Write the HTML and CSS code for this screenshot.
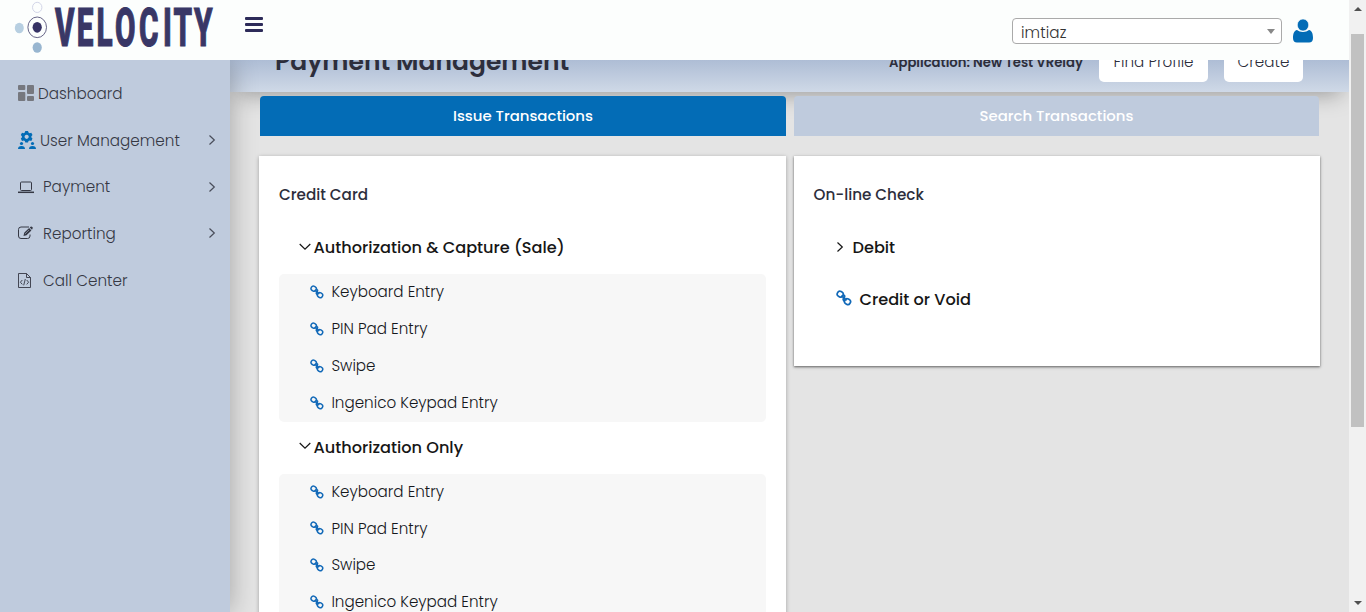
FILE: index.html
```html
<!DOCTYPE html>
<html lang="en">
<head>
<meta charset="utf-8">
<title>Velocity - Payment Management</title>
<link rel="stylesheet" href="styles.css">
</head>
<body>
<svg class="symbols" aria-hidden="true">
  <symbol id="link" viewBox="0 0 14 14"><g fill="none" stroke="#1269b8" stroke-width="1.500"><rect x="1.100" y="1.300" width="5.200" height="4.700" rx="2.200" transform="rotate(30 3.700 3.600)"/><rect x="7.500" y="7.800" width="5.200" height="4.700" rx="2.200" transform="rotate(30 10.100 10.100)"/><path d="M4.700 4.900 9.300 9M6.400 4 7.600 5.200 7.400 6.700M6.500 7.200 6.300 8.600 7.500 9.900"/></g></symbol>
  <symbol id="right" viewBox="0 0 8 12"><path d="M1.500 1.500 6.300 6 1.500 10.500" fill="none" stroke="currentColor" stroke-width="1.200"/></symbol>
  <symbol id="down" viewBox="0 0 12 8"><path d="M.7 1 6 6.200 11.300 1" fill="none" stroke="currentColor" stroke-width="1.200"/></symbol>
</svg>
<div class="app">
  <header class="topbar">
    <svg class="logo" width="220" height="60" viewBox="0 0 220 60">
      <ellipse cx="37.200" cy="7.400" rx="4.700" ry="5.100" fill="none" stroke="#d3d6e8"/>
      <ellipse cx="19.300" cy="28" rx="4.500" ry="5.200" fill="#b7cfe1"/>
      <ellipse cx="37.200" cy="47.500" rx="4.600" ry="5.200" fill="#98b6d0"/>
      <ellipse cx="37.200" cy="27.300" rx="9.300" ry="10.300" fill="none" stroke="#565379" stroke-width=".9"/>
      <ellipse cx="37.200" cy="27.300" rx="4.600" ry="5.400" fill="#353264"/>
      <text class="wordmark" transform="scale(.56 1)" x="98 137 172.500 205.500 248.300 291 310 346.500" y="46.200">VELOCITY</text>
    </svg>
    <button class="burger" aria-label="Menu"><i></i><i></i><i></i></button>
    <div class="picker"><span>imtiaz</span><i class="caret"></i></div>
    <svg class="user" width="20" height="24" viewBox="0 0 20 24" fill="#036cb6"><path d="M4 11C1 11.500 0 15 0 19c0 3 1.500 4.500 4 4.500h12c2.500 0 4-1.500 4-4.500 0-4-1-7.500-4-8-3 2.600-9 2.600-12 0Z"/><ellipse cx="10" cy="6" rx="5.700" ry="6" stroke="#fcfefd" stroke-width=".6"/></svg>
  </header>
  <nav class="sidebar">
    <a class="item"><svg width="16" height="16" viewBox="0 0 16 16" fill="#76787f"><rect width="7.300" height="5" rx="1"/><rect y="7" width="7.300" height="9" rx="1"/><rect x="9" width="7" height="9" rx="1"/><rect x="9" y="11" width="7" height="5" rx="1"/></svg><span class="n1">Dashboard</span></a>
    <a class="item"><svg width="18" height="18" viewBox="0 0 18 18" fill="#036cb6"><path fill-rule="evenodd" d="M7.300 0h2.700l.5 1.600 1.100.6 1.700-.4 1.200 2.200-1.100 1.200v1.200L14.500 7.600l-1.200 2.300-1.700-.4-1.100.6-.5 1.400H7.300l-.5-1.400-1.100-.6-1.700.4-1.200-2.300 1.100-1.200V5.200L2.800 4 4 1.800l1.700.4 1.100-.6ZM8.650 3.700a2.100 2.100 0 1 0 .01 0Z"/><circle cx="3.500" cy="12.500" r="1.600"/><circle cx="14.500" cy="12.500" r="1.600"/><path d="M0 18c0-2 1.200-3 3.500-3S7 16 7 18ZM11 18c0-2 1.200-3 3.500-3s3.500 1 3.500 3Z"/></svg><span class="n2">User Management</span><svg class="chev" width="8" height="12"><use href="#right"/></svg></a>
    <a class="item"><svg width="16" height="14" viewBox="0 0 16 14" fill="none" stroke="#353844"><rect x="2.500" y="2" width="11" height="8.500" rx="1"/><path stroke-width="1.500" d="M0 12.300h16"/></svg><span class="n3">Payment</span><svg class="chev" width="8" height="12"><use href="#right"/></svg></a>
    <a class="item"><svg width="16" height="14" viewBox="0 0 16 14" fill="none" stroke="#353844"><path d="M11 1H3Q.5 1 .5 3.500v6.500Q.5 12.500 3 12.500h6.500q2.500 0 2.500-2.500V8.500"/><path fill="#353844" stroke="none" d="m5.500 10 .7-3.200 4.900-4.700 2.300 2.300-4.900 4.800ZM11.700 1.500 13 .5q1 0 1.900 1.300L14 3.800Z"/><path d="m7 8 4-4" stroke="#bfcbdd" stroke-width=".5"/></svg><span class="n4">Reporting</span><svg class="chev" width="8" height="12"><use href="#right"/></svg></a>
    <a class="item"><svg width="13" height="15" viewBox="0 0 13 15" fill="none" stroke="#353844" stroke-width=".9"><path d="M.5.500h8l4 4v10H.5ZM8.500.500v4h4M4.300 7 2.400 9.200l1.900 2.200M8.700 7l1.900 2.200-1.900 2.200M7.300 6l-1.600 6.300"/></svg><span class="n5">Call Center</span></a>
  </nav>
  <main class="content">
    <section class="band">
      <h1>Payment Management</h1>
      <strong class="application">Application: New Test VRelay</strong>
      <button class="action find">Find Profile</button>
      <button class="action create">Create</button>
    </section>
    <div class="tabs">
      <button class="tab active">Issue Transactions</button>
      <button class="tab search">Search Transactions</button>
    </div>
    <div class="panels">
      <section class="card">
        <h2>Credit Card</h2>
        <h3 class="sale"><svg width="12" height="8"><use href="#down"/></svg><span>Authorization &amp; Capture (Sale)</span></h3>
        <ul>
          <li><svg width="14" height="14"><use href="#link"/></svg><span>Keyboard Entry</span></li>
          <li><svg width="14" height="14"><use href="#link"/></svg><span>PIN Pad Entry</span></li>
          <li><svg width="14" height="14"><use href="#link"/></svg><span>Swipe</span></li>
          <li><svg width="14" height="14"><use href="#link"/></svg><span>Ingenico Keypad Entry</span></li>
        </ul>
        <h3 class="only"><svg width="12" height="8"><use href="#down"/></svg><span>Authorization Only</span></h3>
        <ul class="lower">
          <li><svg width="14" height="14"><use href="#link"/></svg><span>Keyboard Entry</span></li>
          <li><svg width="14" height="14"><use href="#link"/></svg><span>PIN Pad Entry</span></li>
          <li><svg width="14" height="14"><use href="#link"/></svg><span>Swipe</span></li>
          <li><svg width="14" height="14"><use href="#link"/></svg><span>Ingenico Keypad Entry</span></li>
        </ul>
      </section>
      <section class="card check">
        <h2>On-line Check</h2>
        <h3 class="debit"><svg width="8" height="12"><use href="#right"/></svg><span>Debit</span></h3>
        <h3 class="void"><svg width="16" height="16"><use href="#link"/></svg><span>Credit or Void</span></h3>
      </section>
    </div>
  </main>
  <div class="scroll"><i class="up"></i><i class="thumb"></i><i class="down"></i></div>
</div>
</body>
</html>
```

FILE: styles.css
```css
* { box-sizing: border-box; }
body { margin: 0; font-family: Poppins, Inter, "Liberation Sans", sans-serif; font-size: 15.200px; color: #2d2e3c; overflow: hidden; }
button { border: 0; padding: 0; font: inherit; color: inherit; background: none; }
h1, h2, h3, ul { margin: 0; padding: 0; }
svg { display: block; flex: none; }
.symbols { position: absolute; width: 0; height: 0; }
.app { display: grid; grid-template-columns: 230px 1119px 17px; grid-template-rows: 60px 552px; height: 612px; background: #e4e4e4; overflow: hidden; }

.topbar { grid-column: 1 / 3; z-index: 3; display: flex; background: #fcfefd; }
.wordmark { font: 800 53px Roboto, "Liberation Sans", sans-serif; fill: #393766; stroke: #393766; stroke-width: 1.200px; }
.burger { width: 18px; height: 15px; margin: 17px 0 0 25px; display: flex; flex-direction: column; justify-content: space-between; }
.burger i { height: 3px; width: 18px; background: #2d2b59; border-radius: 1px; }
.picker { width: 270px; height: 26px; margin: 18px 11px 0 auto; padding: 1px 6px 0 7px; border: 1px solid #aaa; border-radius: 4px; background: #fff; display: flex; align-items: center; justify-content: space-between; color: #333; font-weight: 300; letter-spacing: .1px; }
.picker span { padding: 2px 0 0 1px; }
.caret { border: 4px solid transparent; border-top: 5px solid #888; border-bottom: 0; }
.user { margin: 19px 36px 0 0; width: 20px; }

.sidebar { z-index: 2; padding: 10px 14px 0 18px; background: #bfcbdd; box-shadow: 2px 0 24px rgba(0,0,0,.25); color: #353844; clip-path: inset(0 -50px 0 0); }
.item { display: flex; align-items: center; height: 46.700px; font-weight: 300; letter-spacing: .03px; }
.chev { margin-left: auto; opacity: .85; }
.n1 { margin-left: 4px; }
.n2 { margin-left: 4px; }
.n3, .n4 { margin-left: 9px; }
.n5 { margin-left: 12px; }

.content { min-width: 0; }
.band { position: relative; display: flex; height: 52px; margin-top: -20px; padding-left: 45px; background: linear-gradient(#9eb0cc 0, #aebdd5 20px, #cfd9e7 52px); box-shadow: 0 10px 22px -8px rgba(0,0,0,.35); }
h1 { width: 614px; font-size: 25px; line-height: 32px; font-weight: 600; padding-top: 6px; white-space: nowrap; }
.application { width: 194px; padding-top: 14px; line-height: 18px; font-size: 13.200px; font-weight: 600; white-space: nowrap; }
.action { height: 42px; background: #fff; border-radius: 5px; font-weight: 300; padding-top: 1px; }
.find { width: 109px; margin-left: 16px; }
.create { width: 79px; margin-left: 16px; }
.tabs { position: relative; display: grid; grid-template-columns: 526px 525px; gap: 8px; padding: 4px 0 0 30px; }
.tab { height: 40px; border-radius: 4px 4px 0 0; background: #bfcbdd; color: #fff; font-size: 14.900px; font-weight: 500; padding-bottom: 1px; }
.active { background: #036cb6; }
.panels { display: grid; grid-template-columns: 527px 526px; gap: 8px; padding: 20px 0 0 29px; align-items: start; }
.card { min-height: 520px; padding: 20px; background: #fff; box-shadow: 0 1px 4px rgba(0,0,0,.3); }
.check { min-height: 0; height: 210px; padding-left: 19.500px; box-shadow: 0 1px 2px rgba(0,0,0,.45), 0 1px 4px rgba(0,0,0,.2); }
h2 { font-size: 15.200px; line-height: 38px; font-weight: 500; }
h3 { display: flex; align-items: center; height: 52px; padding-left: 19.500px; gap: 3px; color: #161616; font-size: 16.150px; font-weight: 500; }
h3 svg { position: relative; top: -1px; }
h3.sale { height: 60px; padding-top: 7px; }
h3.only { padding-bottom: 2px; }
ul { list-style: none; height: 148px; background: #f7f7f7; border-radius: 5px; color: #16181d; }
li { display: flex; align-items: center; height: 36.900px; padding: 0 0 1px 31px; gap: 7.400px; font-weight: 300; font-size: 15.150px; }
.lower li { height: 36.600px; }
.debit { height: 60px; padding: 7px 0 0 22px; gap: 9px; }
h3.void { padding: 0 0 2px 22px; gap: 8px; }

.scroll { grid-column: 3; grid-row: 1 / 3; z-index: 4; display: flex; flex-direction: column; align-items: center; background: #f1f1f1; }
.scroll i { display: block; }
.up { margin-top: 7px; border: 4px solid transparent; border-top: 0; border-bottom-color: #505050; }
.thumb { width: 13px; height: 393px; margin-top: 23px; background: #c1c1c1; }
.down { margin-top: auto; margin-bottom: 7px; border: 4px solid transparent; border-bottom: 0; border-top-color: #505050; }
```
